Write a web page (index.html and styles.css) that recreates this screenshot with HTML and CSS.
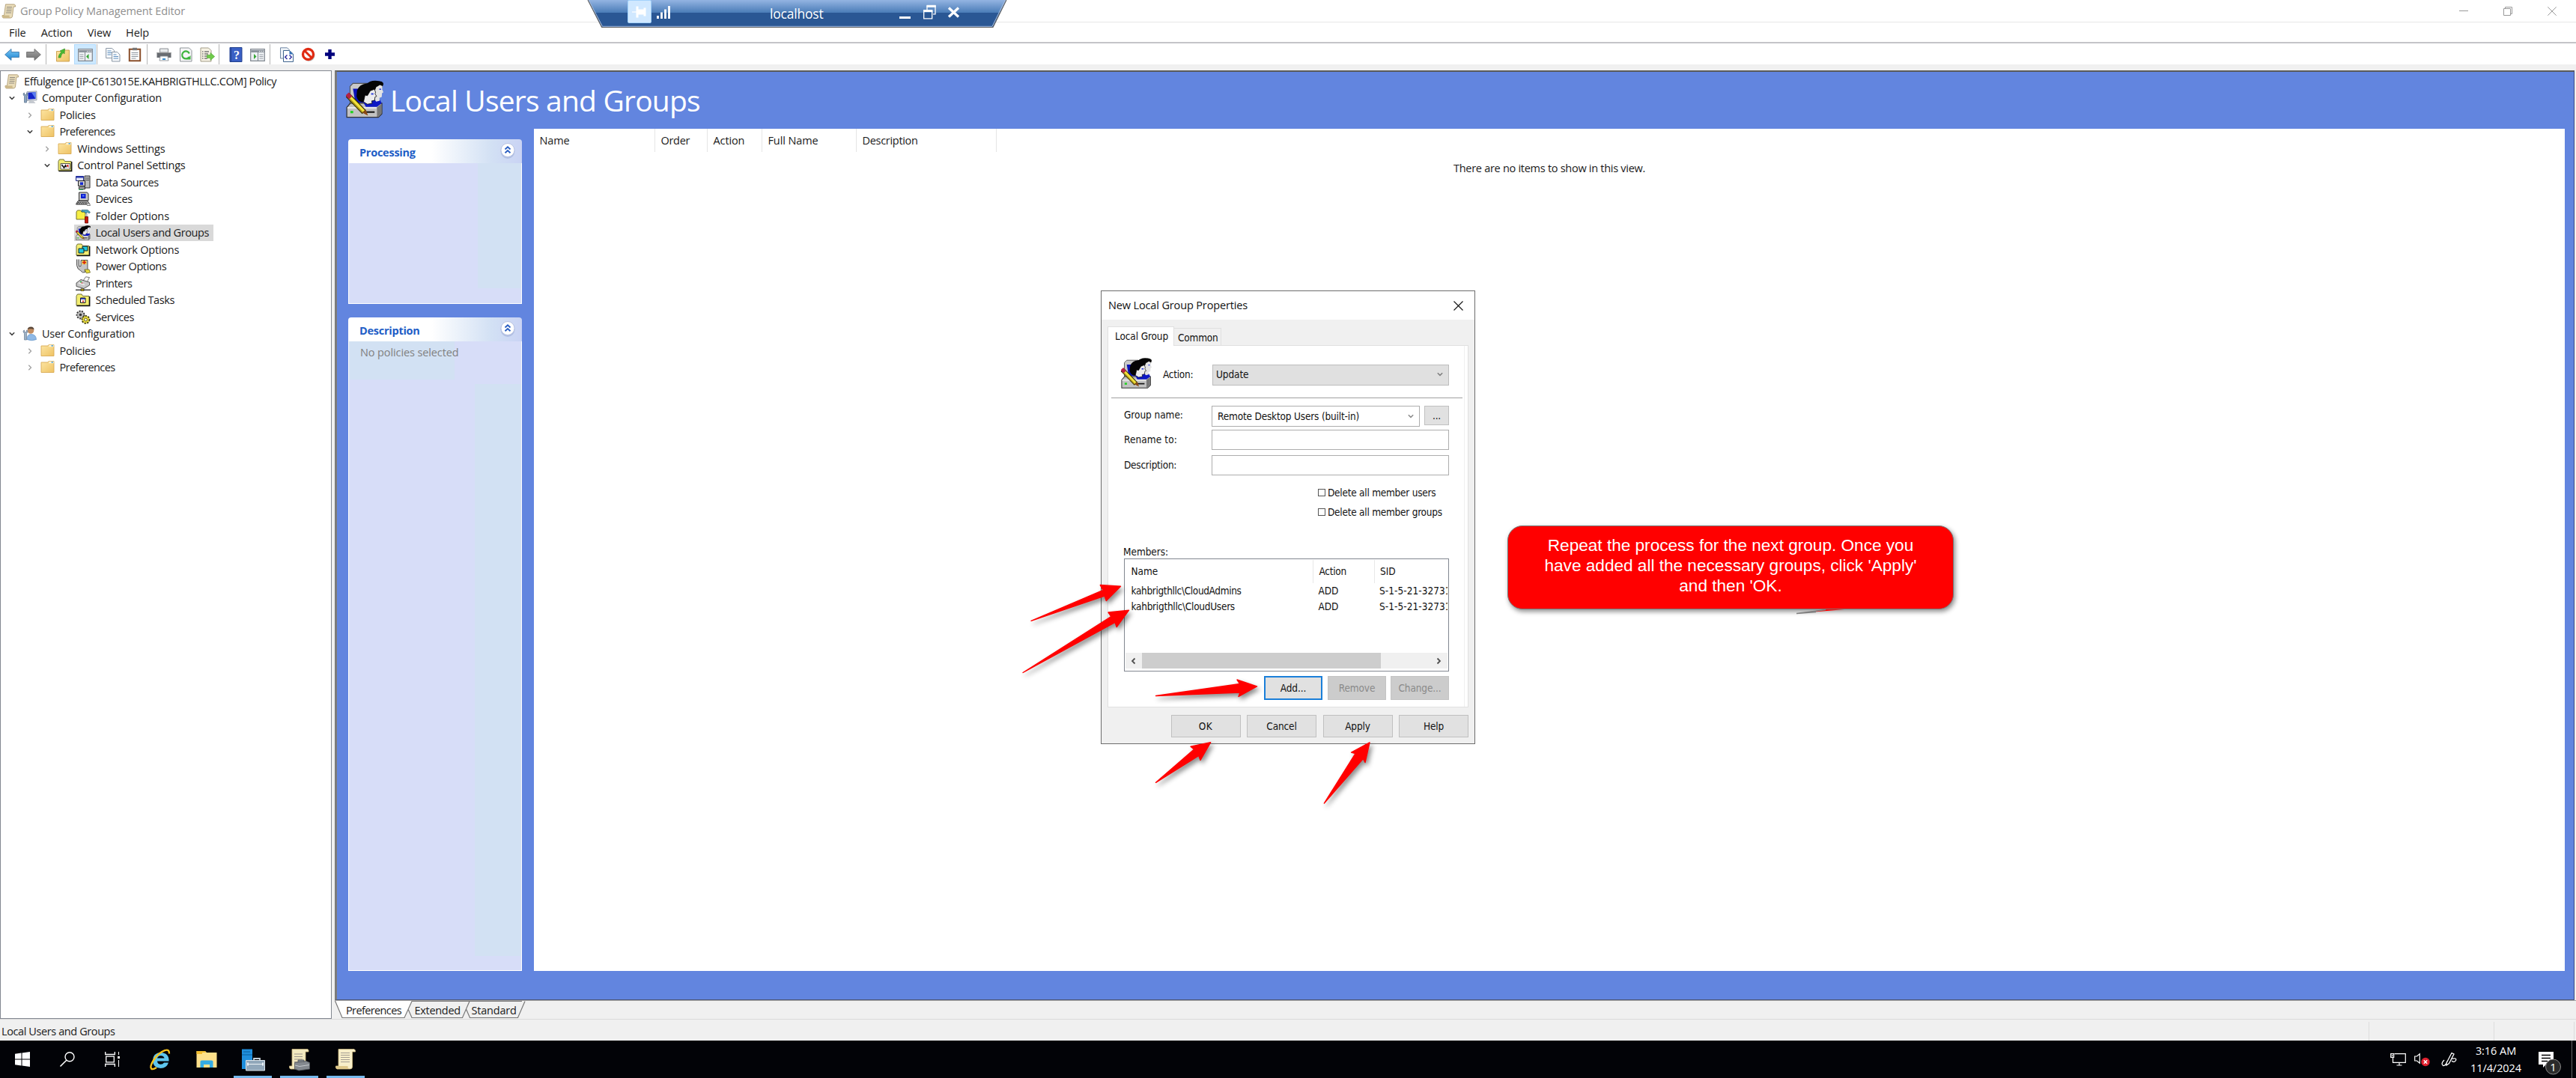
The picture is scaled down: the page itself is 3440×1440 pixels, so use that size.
FILE: index.html
```html
<!DOCTYPE html>
<html lang="en">
<head>
<meta charset="utf-8">
<title>Group Policy Management Editor</title>
<link rel="stylesheet" href="styles.css">
</head>
<body>
<svg class="defs" aria-hidden="true">
  <defs>
    <linearGradient id="gFolder" x1="0" y1="0" x2="1" y2="1"><stop offset="0" stop-color="#fde6a4"/><stop offset="1" stop-color="#eec263"/></linearGradient>
    <linearGradient id="gRdp" x1="0" y1="0" x2="0" y2="1"><stop offset="0" stop-color="#93b4e2"/><stop offset="1" stop-color="#4a7cb7"/></linearGradient>
    <linearGradient id="gBack" x1="0" y1="0" x2="0" y2="1"><stop offset="0" stop-color="#7cc8f5"/><stop offset="1" stop-color="#1b82cf"/></linearGradient>
    <linearGradient id="gFwd" x1="0" y1="0" x2="0" y2="1"><stop offset="0" stop-color="#a5a5a5"/><stop offset="1" stop-color="#6f6f6f"/></linearGradient>
    <symbol id="scroll" viewBox="0 0 20 20"><path d="M5.500.8h11.500q2 .5 1.500 3.200h-2.500L14.500 17q-.5 2-2.500 2H2.500Q.6 18.500 1 15.500h2.500z" fill="#e9dcb9" stroke="#a8946a" stroke-width=".8"/><path d="M1 15.500h9.500q-.3 3 1.500 3.400H2.500Q.6 18.500 1 15.500z" fill="#cdb98a"/><path d="M7 4.500h7M6.700 7h7M6.500 9.500h7M6 12h7" stroke="#8f8a80" stroke-width="1"/></symbol>
    <symbol id="folder" viewBox="0 0 20 20"><path d="M1 3h9l1-1.500h7v15H1z" fill="url(#gFolder)" stroke="#d9ab55" stroke-width=".9"/><path d="M11.500 1.700h6.200v2.600h-6.200z" fill="#fff6d8"/><path d="M14.500 2H17v1.700h-2.500z" fill="#62aee0"/></symbol>
    <symbol id="yfolder" viewBox="0 0 20 20"><path d="M1 4.500 2.500 2h5.500l1.500 2.500H18V17H1z" fill="#f3ee72" stroke="#6e6e38"/><path d="M1.500 17.500h17.200V5" fill="none" stroke="#111" stroke-width="1.400"/></symbol>
    <symbol id="users" viewBox="0 0 32 32">
      <path d="M3.500 5 6 2.500h12V20H3.500z" fill="#c9c9c9" stroke="#555" stroke-width=".7"/><path d="M6 7h10v12H8z" fill="#0a12b8"/>
      <path d="M.7 23l3-3.500h27v9l-3 3H.7z" fill="#c2c2c2" stroke="#333" stroke-width=".8"/><path d="M26.500 31v-8l3.800-3v8.500l-3 2.500z" fill="#777"/><path d="M1.200 23.300h25" stroke="#f4f4f4"/><path d="M15 27h9.500" stroke="#111" stroke-width="1.300"/><path d="M3.800 26h2.400v2H3.800z" fill="#1fd31f"/>
      <path d="M15 19l8-3 6 .5 1.500 3-4 3H17z" fill="#0d18c4"/>
      <path d="M17 3.500Q20 .2 25 .2q7 .1 7 2.800l-1 3-4.500-.5z" fill="#050505"/>
      <path d="M24.500 6.500 29 3.800l2.200 1-.3 2.700 1.100 2.500-1.200.8-.2 3.200-2 .8.200 2.500-3 .8-2-3z" fill="#e4e4e4"/><path d="M28.500 7.500h1.500" stroke="#2336d8"/>
      <path d="M9 13.500 9.500 8.500Q11.500 3 17.500 2.500q6-.7 8.500 2.800l-1 2.700-1 1-5 5-2 3.500-3 1Q10 18 9 13.500z" fill="#050505"/>
      <path d="M16.300 12.500l2 .5 2.500-4.200 3.500-1.300 1 2.500-.4 1.500 1.300 2-1.400.7-.3 2.800-2.500.5.400 2-4 .8-3.400-2z" fill="#ececec" stroke="#050505" stroke-width=".5"/><path d="M21.500 11.500h2" stroke="#2336d8" stroke-width="1.200"/>
      <path d="M1.500 12.500 15.500 27" stroke="#332d00" stroke-width="4.600"/><path d="M3 14 15 26.500" stroke="#f4e23c" stroke-width="3"/><path d="M2.200 14.800 14 27" stroke="#a99416"/><path d="M1 11.500l3 3.200" stroke="#b52043" stroke-width="3.800"/><path d="M14 27.500l3-2.500 1.800 5z" fill="#8b4a14"/>
    </symbol>
    <symbol id="server" viewBox="0 0 20 20"><path d="M12 1h7v16h-7z" fill="#bbb" stroke="#333"/><path d="M13.500 4H18M13.500 6.500H18" stroke="#444"/><path d="M.5 1.500h10v6H.5z" fill="#dfe3f5" stroke="#222b80"/><path d="M.5 2.500h10" stroke="#2534b0" stroke-width="2"/><path d="M3.500 7.500h9v7h-9z" fill="#ccc" stroke="#222"/><path d="M6 9.500h4V13H6z" fill="#1528d0"/><path d="M4.500 16h8v2.500h-8z" fill="#ccc" stroke="#222"/><path d="M4 19.300h6" stroke="#39c06a"/></symbol>
    <symbol id="device" viewBox="0 0 20 20"><path d="M4.500 1h11l1.500 2v9H4.500z" fill="#c9c9c9" stroke="#333"/><path d="M7 3h6.500v6H7z" fill="#0c1ed0"/><path d="M9 4.500h2.500v2H9z" fill="#5c80ff"/><path d="M3 12.500h13l2.500 4.500H.5z" fill="#bdbdbd" stroke="#333"/><path d="M3 14.500h12M2 16h13" stroke="#222" stroke-dasharray="1.500 1"/><path d="M14.500 15.500h4l1 3h-4z" fill="#ddd" stroke="#555" stroke-width=".7"/></symbol>
    <symbol id="fopt" viewBox="0 0 20 20"><path d="M1 4 2.500 2h4l1.500 2h5v10H1z" fill="#f6ef45" stroke="#75702a"/><path d="M8 1.500h8l3.500 3-1.500 1.500-2.500-2-1 2H13l-1-2H8z" fill="#4ea7c4" stroke="#134a5c" stroke-width=".6"/><path d="M13.300 6h2.400v5h-2.400z" fill="#bbb"/><path d="M12.500 10.500h4V19h-4z" fill="#c9190f" stroke="#5c0c08" stroke-width=".8"/></symbol>
    <symbol id="power" viewBox="0 0 20 20"><path d="M1.500.5v8q.5 5 5 7l3 2.500 3.500-.5-1-3h4V1.500H7v8H4.500V.5" fill="#c4c4c4" stroke="#333" stroke-width=".8"/><path d="M8.500 2h6v5h-6z" fill="#f4d53a"/><path d="M11.500 2v5M9 4.500h5" stroke="#d41c12" stroke-width="1.600"/><path d="M12 14h6l1.500 4-5 1z" fill="#e6da3b" stroke="#5e5a1a" stroke-width=".7"/></symbol>
    <symbol id="printer" viewBox="0 0 20 20"><path d="M10 6 13.500.8l5 .8L15 8z" fill="#fff" stroke="#555" stroke-width=".8"/><path d="M1 9l6-4.500L18.500 8v4L11 16.500 1 13.500z" fill="#c8c8c8" stroke="#333" stroke-width=".8"/><path d="M4 9l8 2.500" stroke="#eee" stroke-width="1.500"/><path d="M6 7.500h2" stroke="#28b13a" stroke-width="1.500"/><path d="M7.500 9h2" stroke="#d22"/><path d="M0 18.300h20" stroke="#111" stroke-width="1.200"/><path d="M7 16.800h4v3H7z" fill="#b79f16" stroke="#111" stroke-width=".6"/></symbol>
    <symbol id="gears" viewBox="0 0 20 20"><circle cx="6.500" cy="6.500" r="5" fill="#bdbdbd" stroke="#333" stroke-width="1.800" stroke-dasharray="2 1.500"/><circle cx="6.500" cy="6.500" r="1.800" fill="#333"/><circle cx="13.500" cy="13" r="5" fill="#e9dc3c" stroke="#454011" stroke-width="1.900" stroke-dasharray="2.200 1.500"/><circle cx="13.500" cy="13" r="1.900" fill="#fffde0" stroke="#454011" stroke-width=".8"/></symbol>
    <symbol id="pc" viewBox="0 0 20 20"><path d="M6 1.500 19 .8v12L6 13.500z" fill="#cfd4dc" stroke="#8f97a4" stroke-width=".8"/><path d="M7.500 2.800 17.500 2v9L7.500 11.800z" fill="#1425c8"/><path d="M12 2.400l5.500-.4v9z" fill="#5a7df0"/><path d="M9 14h6l2.500 3H8z" fill="#c5c9d0"/><path d="M1 4q0 2.500 1.500 3.500V16h3V7.500Q7 6.500 7 4L5.500 3v2.500h-3V3z" fill="#8aa3bd" stroke="#56708c" stroke-width=".7"/></symbol>
    <symbol id="user" viewBox="0 0 20 20"><circle cx="11" cy="5.500" r="4.300" fill="#c28e63"/><path d="M6.600 4.500Q7 .5 11.500.5q4 .3 4 4-2-1.500-5-1.200-2.500 0-3.900 1.200z" fill="#5a4738"/><path d="M6 17.500Q6 10.500 11.500 10.500 18 10.500 18.500 17.500q-6 2.500-12.500 0z" fill="#8fb9e6" stroke="#5f8fc4" stroke-width=".7"/><path d="M1 6q0 2.500 1.500 3.500V18h3V9.500Q7 8.500 7 6L5.500 5v2.500h-3V5z" fill="#9db1c4" stroke="#6a8098" stroke-width=".7"/></symbol>
    <symbol id="down" viewBox="0 0 8 8"><path d="M.8 2.200 4 5.400 7.200 2.200" fill="none" stroke="#404040" stroke-width="1.500"/></symbol>
    <symbol id="right" viewBox="0 0 8 8"><path d="M2.300.8 5.500 4 2.300 7.200" fill="none" stroke="#a0a0a0" stroke-width="1.300"/></symbol>
    <symbol id="panel" viewBox="0 0 20 20"><path d="M.7 2.700h18.600v15.600H.7z" fill="#eef1f4" stroke="#7f868e" stroke-width="1.200"/><path d="M1.200 4h17.600v3H1.200z" fill="#8c949d"/><path d="M12 5.500h1.200M14.500 5.500h1.200M17 5.500h1" stroke="#fff"/></symbol>
  </defs>
</svg>

<div class="window">
  <header class="titlebar">
    <svg class="i20"><use href="#scroll"/></svg>
    <span class="app-title">Group Policy Management Editor</span>
    <div class="controls">
      <svg width="12" height="12" viewBox="0 0 12 12"><path d="M0 5.500h12" stroke="#999"/></svg>
      <svg width="12" height="12" viewBox="0 0 12 12"><path d="M.5 2.500h9v9h-9zM2.500 2.500v-2h9v9h-2" fill="none" stroke="#999"/></svg>
      <svg width="12" height="12" viewBox="0 0 12 12"><path d="M.3.3l11.400 11.400M11.700.3.3 11.700" stroke="#999"/></svg>
    </div>
  </header>
  <nav class="menubar"><span>File</span><span>Action</span><span>View</span><span>Help</span></nav>
  <div class="toolbar">
    <div class="tg g1">
      <svg class="i20" viewBox="0 0 20 20"><path d="M.6 10 9 2.500V6.500h10.400v7H9v4z" fill="url(#gBack)" stroke="#3b78ad" stroke-width=".9"/></svg>
      <svg class="i20" viewBox="0 0 20 20"><path d="M19.400 10 11 2.500V6.500H.6v7H11v4z" fill="url(#gFwd)" stroke="#6d6d6d" stroke-width=".9"/></svg>
    </div>
    <div class="tg g2">
      <svg class="i20" viewBox="0 0 20 20"><path d="M1.500 5.500h9l1-1.500h7v15h-17z" fill="url(#gFolder)" stroke="#c99b47" stroke-width=".9"/><path d="M4 14q.5-5 4-7.500L6 5l6.500-3-.5 7-1.800-1.500Q7.500 10 7 14z" fill="#49ba33" stroke="#2e8a1f" stroke-width=".6"/></svg>
      <span class="pressed"><svg class="i20" viewBox="0 0 20 20"><use href="#panel"/><path d="M9.500 7v11" stroke="#7f868e"/><path d="M2.500 10h5M2.500 12.500h5M2.500 15h5" stroke="#9aa0a8"/><path d="M14.500 9v7L11 12.500z" fill="#35a635"/></svg></span>
    </div>
    <div class="tg g3">
      <svg class="i20" viewBox="0 0 20 20"><path d="M.6 1.500h8l3 3v10H.6z" fill="#f7f9fb" stroke="#8c98a6"/><path d="M2.500 5h5M2.500 7.500h6M2.500 10h5" stroke="#5d8fc0"/><path d="M8.500 6.500h7l3.500 3.500v9H8.500z" fill="#f7f9fb" stroke="#8c98a6"/><path d="M10.500 10h4M10.500 12.500h6.500M10.500 15h6.500" stroke="#5d8fc0"/></svg>
      <svg class="i20" viewBox="0 0 20 20"><path d="M2.800 2.800h14.400v15.400H2.800z" fill="#fff" stroke="#8a4f2b" stroke-width="2"/><path d="M7 .8h6v3.400H7z" fill="#777"/><path d="M5.500 7.500h9M5.500 10h9M5.500 12.500h9M5.500 15h6" stroke="#8b939c"/></svg>
    </div>
    <div class="tg g4">
      <svg class="i20" viewBox="0 0 20 20"><path d="M4.500 2h11v5h-11z" fill="#e8eaec" stroke="#8d9196"/><path d="M.5 7h19v7H.5z" fill="#676b70"/><path d="M.5 7.500h19" stroke="#999"/><path d="M5 12h10l1 6H4z" fill="#f6f8fa" stroke="#858a90" stroke-width=".8"/><path d="M8 15h4v2H8z" fill="#3b8fd3"/></svg>
      <svg class="i20" viewBox="0 0 20 20"><path d="M2.500 1h12l3.500 3.500V19H2.500z" fill="#f5f6f7" stroke="#8f9499"/><path d="M14.500 13a5 5 0 1 1 .3-4.500" fill="none" stroke="#3db43d" stroke-width="2.200"/><path d="M16.500 11v5.500h-5.500z" fill="#3db43d"/></svg>
      <svg class="i20" viewBox="0 0 20 20"><path d="M1 1h10.500L15 4.500V19H1z" fill="#f6f2e4" stroke="#a39d88"/><path d="M3 6h1.500M3 9h1.500M3 12h1.500M3 15h1.500M6 6h6M6 9h5M6 12h4M6 15h4" stroke="#777" stroke-width="1.300"/><path d="M9.500 10.500H14V7.500l5.700 5-5.700 5V14.500H9.500z" fill="#6fcb4a" stroke="#4aa52e" stroke-width=".6"/></svg>
    </div>
    <div class="tg g5">
      <svg class="i20" viewBox="0 0 20 20"><path d="M2 .5h16v19H2z" fill="#3a5fc4" stroke="#22418f"/><path d="M3.500 1v18" stroke="#22418f"/><text x="11" y="15.500" class="q">?</text></svg>
      <svg class="i20" viewBox="0 0 20 20"><use href="#panel"/><path d="M10.500 7v11" stroke="#7f868e"/><path d="M12.500 10h5M12.500 12.500h5M12.500 15h5" stroke="#9aa0a8"/><path d="M5 9v7l3.500-3.500z" fill="#35a635"/></svg>
    </div>
    <div class="tg g6">
      <svg class="i20" viewBox="0 0 20 20"><path d="M1.500.8h9l3 3V15h-12z" fill="#eef3f8" stroke="#7289a5"/><path d="M5.500 4.500h8L18.500 9v10.500h-13z" fill="#fff" stroke="#3f648e"/><path d="M13.500 4.500v5h5z" fill="#2f6fb5"/><path d="M10.500 10.500l-2.800 2.800 2.800 2.800M13.500 10.500l2.800 2.800-2.800 2.800" fill="none" stroke="#2c2ca0" stroke-width="1.400"/></svg>
      <svg class="i20" viewBox="0 0 20 20"><circle cx="10.500" cy="10.800" r="8" fill="#777" opacity=".5"/><circle cx="9.500" cy="9.500" r="7" fill="#fff" stroke="#e02a12" stroke-width="3.300"/><path d="M4.500 4.500l10 10" stroke="#e02a12" stroke-width="3"/></svg>
      <svg class="i20" viewBox="0 0 20 20"><path d="M9.500 3v13M3 9.500h13" stroke="#00007c" stroke-width="4.400"/></svg>
    </div>
  </div>

  <main class="workspace">
    <section class="tree">
      <div class="row root"><svg class="i20"><use href="#scroll"/></svg><span class="t4">Effulgence [IP-C613015E.KAHBRIGTHLLC.COM] Policy</span></div>
      <div class="row l1"><svg class="chev"><use href="#down"/></svg><svg class="i20"><use href="#pc"/></svg><span>Computer Configuration</span></div>
      <div class="row l2"><svg class="chev"><use href="#right"/></svg><svg class="i20"><use href="#folder"/></svg><span class="t3">Policies</span></div>
      <div class="row l2"><svg class="chev"><use href="#down"/></svg><svg class="i20"><use href="#folder"/></svg><span class="t6">Preferences</span></div>
      <div class="row l3"><svg class="chev"><use href="#right"/></svg><svg class="i20"><use href="#folder"/></svg><span class="t1">Windows Settings</span></div>
      <div class="row l3"><svg class="chev"><use href="#down"/></svg><svg class="i20" viewBox="0 0 20 20"><use href="#yfolder"/><path d="M4 7.500h12.500V15H4z" fill="#fff" stroke="#333" stroke-width=".8"/><path d="M5.500 9l3 4 2-3 1 2.500" fill="none" stroke="#111" stroke-width="1.600"/><path d="M11.500 10l3-1.500v5z" fill="#c81e14"/></svg><span>Control Panel Settings</span></div>
      <div class="row l4"><svg class="i20"><use href="#server"/></svg><span class="t4">Data Sources</span></div>
      <div class="row l4"><svg class="i20"><use href="#device"/></svg><span class="t3">Devices</span></div>
      <div class="row l4"><svg class="i20"><use href="#fopt"/></svg><span class="t1">Folder Options</span></div>
      <div class="row l4"><div class="selected"><svg class="i20"><use href="#users"/></svg><span class="t4">Local Users and Groups</span></div></div>
      <div class="row l4"><svg class="i20" viewBox="0 0 20 20"><use href="#yfolder"/><path d="M9 5h7v6H9z" fill="#20c9dd" stroke="#111" stroke-width=".9"/><path d="M4 8h7v6H4z" fill="#20c9dd" stroke="#111" stroke-width=".9"/></svg><span>Network Options</span></div>
      <div class="row l4"><svg class="i20"><use href="#power"/></svg><span class="t4">Power Options</span></div>
      <div class="row l4"><svg class="i20"><use href="#printer"/></svg><span class="t5">Printers</span></div>
      <div class="row l4"><svg class="i20" viewBox="0 0 20 20"><use href="#yfolder"/><path d="M6.500 7h6.500v6.500H6.500z" fill="#fff" stroke="#111"/><path d="M6.500 8h6.500" stroke="#1e2ea0" stroke-width="1.800"/><path d="M9 10.500h2v2H9z" fill="#c22"/></svg><span class="t4">Scheduled Tasks</span></div>
      <div class="row l4"><svg class="i20"><use href="#gears"/></svg><span class="t4">Services</span></div>
      <div class="row l1"><svg class="chev"><use href="#down"/></svg><svg class="i20"><use href="#user"/></svg><span>User Configuration</span></div>
      <div class="row l2"><svg class="chev"><use href="#right"/></svg><svg class="i20"><use href="#folder"/></svg><span class="t3">Policies</span></div>
      <div class="row l2"><svg class="chev"><use href="#right"/></svg><svg class="i20"><use href="#folder"/></svg><span class="t6">Preferences</span></div>
    </section>

    <section class="right">
      <div class="pane">
        <div class="banner"><svg class="bighead"><use href="#users"/></svg><h1>Local Users and Groups</h1></div>
        <div class="pane-body">
          <aside class="side">
            <div class="card processing"><div class="card-head"><b>Processing</b><svg class="collapse" viewBox="0 0 22 22"><ellipse cx="11" cy="12" rx="9.500" ry="10" fill="#8f9fce" opacity=".45"/><circle cx="11" cy="10.500" r="9" fill="#fff" stroke="#b9c3e2"/><path d="M7.500 9.500 11 6.300l3.500 3.200M7.500 14.200 11 11l3.500 3.200" fill="none" stroke="#2b5fc2" stroke-width="1.900"/></svg></div><div class="card-body"></div></div>
            <div class="card description"><div class="card-head"><b>Description</b><svg class="collapse" viewBox="0 0 22 22"><ellipse cx="11" cy="12" rx="9.500" ry="10" fill="#8f9fce" opacity=".45"/><circle cx="11" cy="10.500" r="9" fill="#fff" stroke="#b9c3e2"/><path d="M7.500 9.500 11 6.300l3.500 3.200M7.500 14.200 11 11l3.500 3.200" fill="none" stroke="#2b5fc2" stroke-width="1.900"/></svg></div><div class="card-body">No policies selected</div></div>
          </aside>
          <div class="list">
            <div class="list-head"><span class="t1">Name</span><span class="t3">Order</span><span class="t1">Action</span><span class="t1">Full Name</span><span class="t3">Description</span></div>
            <p class="empty">There are no items to show in this view.</p>
          </div>
        </div>
      </div>
      <div class="tabs">
        <svg class="tab-shape" width="256" height="24" viewBox="0 0 256 24"><path d="M0 0 9.500 22.500H93.500L103 0z" fill="#fff"/><path d="M.5 0 10 22.500H93L103 .5H250M98 11l5 11.500H170.500L180 .5M175.500 11l5 11.500H244.500L254 .5" fill="none" stroke="#777" stroke-width="1.200"/></svg>
        <span class="t6">Preferences</span><span class="t3">Extended</span><span>Standard</span>
      </div>
    </section>
  </main>

  <footer class="status"><span class="t4">Local Users and Groups</span><i class="s1"></i><i class="s2"></i><i class="s3"></i></footer>
</div>

<div class="taskbar">
  <div class="start"><svg width="20" height="20" viewBox="0 0 20 20"><path d="M0 2.800 8.500 1.600v7.900H0zM9.500 1.400 20 0v9.500H9.500zM0 10.500h8.500v7.900L0 17.200zM9.500 10.500H20V20L9.500 18.600z" fill="#fff"/></svg></div>
  <div class="start"><svg width="20" height="20" viewBox="0 0 20 20"><circle cx="13" cy="6.800" r="6" fill="none" stroke="#fff" stroke-width="1.400"/><path d="M8.800 11.200.5 19.500" stroke="#fff" stroke-width="1.600"/></svg></div>
  <div class="start"><svg width="20" height="20" viewBox="0 0 20 20"><path d="M.7 0v3.500h12.600V0M.7 20v-3.500h12.600V20M1.700 6.200h10.600v7.600H1.700z" fill="none" stroke="#fff" stroke-width="1.300"/><path d="M18.500 0v4M18.500 11v9" stroke="#fff"/><path d="M17 6h3v3h-3z" fill="#fff"/></svg></div>
  <div class="apps">
    <div class="app"><svg width="30" height="30" viewBox="0 0 30 30"><path d="M26.500 17.500H11q.5 4.300 4.700 4.300 2.800 0 4.300-2.200h6Q23.500 27 15.500 27 5 26.500 5 16.500 5.300 6.500 15.500 6 27 6.500 26.500 17.500zM11 13.500h9.500Q20 10.500 15.800 10.300 11.800 10.500 11 13.500z" fill="#5ec6ee"/><path d="M27 7.500Q27.500 1 21 3.200 13 6 6.500 15.500 .5 25 3 27.500q2 1.800 7-1.500" fill="none" stroke="#f7c31c" stroke-width="2.400"/></svg></div>
    <div class="app"><svg width="30" height="30" viewBox="0 0 30 30"><path d="M1.500 4h11.500l2 2h13.500v20h-27z" fill="#fde08a"/><path d="M1.500 4h11.500l1 2H9v2H1.500z" fill="#f2bd2e"/><path d="M6.500 26V18q0-1.500 2-1.500h13q2 0 2 1.500v8h-4.500v-4h-8v4z" fill="#34ace4"/></svg></div>
    <div class="app on"><svg width="32" height="30" viewBox="0 0 32 30"><path d="M1 1.500h14V28H1z" fill="#1f8fdd"/><path d="M1 9h14M3 5h9" stroke="#0b5f9e"/><path d="M17 16v-2h8v2" fill="none" stroke="#c3cdd6" stroke-width="1.800"/><path d="M6.500 16.500h25V30h-25z" fill="#91a7ba" stroke="#dbe4eb"/><path d="M9 21.500h20" stroke="#eef3f7"/><path d="M9 19.500v4M29 19.500v4" stroke="#eef3f7" stroke-width="2"/></svg></div>
    <div class="app on"><svg width="30" height="30" viewBox="0 0 30 30"><path d="M5 1.500h21q1.500 1 1 3.500h-4v20q0 3-3 3H3q-2-1-1.500-4H5z" fill="#f2e8bf" stroke="#c6b27a" stroke-width=".8"/><path d="M8 8h11M8 11.500h11M8 15h11M8 18.500h8" stroke="#98918a"/><path d="M13 19v-3h8v3M8.500 19.500 24 17.500l4.500 2V28L14 30l-5.500-2z" fill="#84898f" stroke="#50555a" stroke-width=".8"/><path d="M9 23l6 1.500 13-2" fill="none" stroke="#c5c9cd"/></svg></div>
    <div class="app on"><svg width="30" height="30" viewBox="0 0 30 30"><path d="M5 1.500h21q2 1 1.500 3.500h-4v20q0 3-3 3H3q-2-1-1.500-4H5z" fill="#f8efc9" stroke="#cdb97f" stroke-width=".8"/><path d="M1.500 24h16q-.5 3.500 2.500 4H3q-2-1-1.500-4z" fill="#e0c98a"/><path d="M8 6.500h12M8 9.500h12M8 12.500h12M8 15.500h12M8 18.500h12" stroke="#a39c92"/></svg></div>
  </div>
  <div class="tray">
    <svg width="21" height="20" viewBox="0 0 21 20"><path d="M5.500 2.700h14.800v11.600H3.500V7M12 14.500V18M8.500 18h7" fill="none" stroke="#fff" stroke-width="1.200"/><path d="M.7 2.700h4v4.600h-4zM2.700 4v2" fill="none" stroke="#fff" stroke-width="1.200"/></svg>
    <svg width="21" height="20" viewBox="0 0 21 20"><path d="M.7 6h2.800L7.300 2.700v12.600L3.500 12H.7z" fill="none" stroke="#fff" stroke-width="1.200"/><circle cx="15" cy="13.500" r="5.700" fill="#e0202e"/><path d="M12.800 11.300l4.400 4.400M17.200 11.300l-4.400 4.400" stroke="#fff" stroke-width="1.500"/></svg>
    <svg width="21" height="20" viewBox="0 0 21 20"><path d="M7 15 14 1.500l3 1.500-6.500 12.500L7 18zM4 11q-5 5-1.500 7.500Q6 19 8 12.500M14 9.500q7-2 5.500 2-2 3.500-5.500.5" fill="none" stroke="#fff" stroke-width="1.300"/></svg>
  </div>
  <div class="clock"><span>3:16 AM</span><span>11/4/2024</span></div>
  <div class="notify"><svg width="32" height="32" viewBox="0 0 32 32"><path d="M0 0h20v17H10l-4 4v-4H0z" fill="#fff"/><path d="M4 4.500h12M4 8.500h12M4 12.500h8" stroke="#000" stroke-width="1.300"/><circle cx="19.500" cy="20" r="10" fill="#2b2b2b" stroke="#8a8a8a"/><text x="19.500" y="25.500" class="badge">1</text></svg></div>
</div>

<div class="rdp">
  <svg class="rdp-bg" width="560" height="38" viewBox="0 0 560 38"><path d="M0 0H559L541 36.500H18.500z" fill="#29568f"/><path d="M0 0H559L550.800 17H8.600z" fill="url(#gRdp)"/><path d="M8.600 17H550.800L541.500 36H18.500z" fill="#2a5794"/><path d="M1 0 19.500 35.300H540L557.500 0" fill="none" stroke="#a9bfe0" stroke-width="1"/><path d="M0 0 18.700 36.500H541L559 0" fill="none" stroke="#666" stroke-width="1.100"/></svg>
  <div class="rdp-row">
    <span class="pin"><svg width="20" height="20" viewBox="0 0 20 20"><path d="M0 10h6" stroke="#fff" stroke-width="1.200"/><path d="M7 2.500v15M8 10h9M17 4.500v11" stroke="#fff" stroke-width="3"/><path d="M8 6.500h8v7H8z" fill="#fff"/></svg></span>
    <svg class="signal" width="18" height="17" viewBox="0 0 18 17"><path d="M1.500 17v-4M6.500 17V8.500M11.500 17V4.500M16.500 17V0" stroke="#fff" stroke-width="2.800"/></svg>
    <span class="host">localhost</span>
    <svg class="rmin" width="15" height="20" viewBox="0 0 15 20"><path d="M0 17.500h15" stroke="#fff" stroke-width="3"/></svg>
    <svg class="rres" width="17" height="20" viewBox="0 0 17 20"><path d="M.7 9v9.800h11V9zM5 7V2h11v10.800h-3" fill="none" stroke="#fff" stroke-width="1.300"/><path d="M0 8.500h12.400M4.500 2.200h12.200" stroke="#fff" stroke-width="3"/></svg>
    <svg width="18" height="20" viewBox="0 0 18 20"><path d="M2 4.500l13 12M15 4.500l-13 12" stroke="#fff" stroke-width="3.300"/></svg>
  </div>
</div>

<div class="dialog">
  <div class="dlg-title"><span>New Local Group Properties</span><svg width="13" height="13" viewBox="0 0 13 13"><path d="M.5.5l12 12M12.500.5l-12 12" stroke="#111" stroke-width="1.100"/></svg></div>
  <div class="dlg-tabs"><span class="tab active">Local Group</span><span class="tab">Common</span></div>
  <div class="page">
    <div class="action-row"><svg class="head40"><use href="#users"/></svg><label class="d2">Action:</label><div class="combo disabled"><span class="d1">Update</span><svg class="cv"><use href="#down"/></svg></div></div>
    <div class="fields">
      <label class="d0">Group name:</label><div class="pair"><div class="combo"><span class="grp">Remote Desktop Users (built-in)</span><svg class="cv"><use href="#down"/></svg></div><button class="more">...</button></div>
      <label class="dp">Rename to:</label><div class="input"></div>
      <label class="d3">Description:</label><div class="input"></div>
    </div>
    <div class="checks"><div><i></i>Delete all member users</div><div><i></i>Delete all member groups</div></div>
    <div class="members-label d0">Members:</div>
    <div class="members">
      <div class="mhead"><span>Name</span><span class="d3">Action</span><span>SID</span></div>
      <div class="mrow"><span class="d4">kahbrigthllc\CloudAdmins</span><span>ADD</span><span class="sid">S-1-5-21-32731</span></div>
      <div class="mrow"><span class="d3">kahbrigthllc\CloudUsers</span><span>ADD</span><span class="sid">S-1-5-21-32731</span></div>
      <div class="scroll"><svg width="22" height="20" viewBox="0 0 22 20"><path d="M12.500 6.500 9 10l3.500 3.500" fill="none" stroke="#505050" stroke-width="1.800"/></svg><i></i><svg class="rarr" width="22" height="20" viewBox="0 0 22 20"><path d="M8.500 6.500 12 10l-3.500 3.500" fill="none" stroke="#505050" stroke-width="1.800"/></svg></div>
    </div>
    <div class="member-btns"><button class="focus">Add...</button><button disabled>Remove</button><button disabled>Change...</button></div>
  </div>
  <div class="dlg-btns"><button class="ok">OK</button><button>Cancel</button><button>Apply</button><button>Help</button></div>
</div>

<svg class="arrows" width="480" height="310" viewBox="1360 775 480 310">
  <g fill="#f00" stroke="#f00" stroke-width="1.400" stroke-linejoin="round">
    <path d="M1377 829.300 1473 788.500 1469.200 781.500 1496.500 783.200 1477.300 802.500 1475 796z"/>
    <path d="M1366 898.500 1483.800 823.500 1480 818 1507.500 815.200 1491.200 837.500 1489 831.500z"/>
    <path d="M1543.500 929.500 1655.700 913.500 1652 908 1678.500 917 1654 930.500 1656 925z"/>
    <path d="M1543.500 1045.300 1594.500 1001 1590 997.200 1616.700 991.600 1603 1015.500 1600.800 1009.500z"/>
    <path d="M1768.300 1073 1810 1006.500 1804.500 1005 1829 991.800 1823 1018.500 1820.300 1013.500z"/>
  </g>
</svg>

<div class="callout">
  <svg class="tail" width="66" height="8" viewBox="0 0 66 8"><path d="M0 6.500 40 1h24z" fill="#f00"/><path d="M0 6.500 39 1.500M0 6.500l26-2" stroke="#808080" stroke-width="1.300"/></svg>
  <p>Repeat the process for the next group. Once you<br>have added all the necessary groups, click 'Apply'<br>and then 'OK.</p>
</div>
</body>
</html>
```
FILE: styles.css
```css
* { box-sizing: border-box; }
html, body { margin: 0; width: 3440px; height: 1440px; overflow: hidden; }
body {
  display: flex;
  flex-direction: column;
  position: relative;
  background: #fff;
  color: #1a1a1a;
  font: 14.5px/20px "Open Sans", "Noto Sans", sans-serif;
  letter-spacing: -.21px;
  white-space: nowrap;
}
svg { display: block; flex: none; overflow: visible; }
.defs { position: absolute; width: 0; height: 0; }
.i20 { width: 20px; height: 20px; }
.t1 { letter-spacing: -.11px; }
.t3 { letter-spacing: -.3px; }
.t4 { letter-spacing: -.4px; }
.t5 { letter-spacing: -.54px; }
.t6 { letter-spacing: -.62px; }

/* Main window frame */
.window { height: 1390px; display: flex; flex-direction: column; background: #f0f0f0; }
.titlebar { height: 30px; display: flex; align-items: center; background: #fff; border-bottom: 1px solid #e8e8e8; padding: 0 26px 0 2px; }
.titlebar .i20 { margin-right: 5px; }
.app-title { color: #8f8f8f; letter-spacing: -.11px; }
.controls { margin-left: auto; display: flex; gap: 47px; }
.menubar { height: 28px; display: flex; gap: 20px; background: #fff; border-bottom: 2px solid #c4c4c8; padding: 4px 0 0 12px; letter-spacing: -.08px; }
.toolbar { height: 28px; display: flex; background: #fff; }
.tg { display: flex; align-items: center; gap: 9px; padding: 0 0 0 12px; border-right: 1px solid #b5b5b5; height: 27px; margin-top: 1px; }
.g1 { width: 62px; padding-left: 6px; }
.g2 { width: 68px; gap: 5px; }
.g3 { width: 67px; padding-left: 11px; }
.g4 { width: 96px; }
.g5 { width: 68px; }
.g6 { border: 0; }
.pressed { width: 29px; height: 27px; display: flex; align-items: center; justify-content: center; background: #cce8ff; border: 1px solid #b3dbfb; }
.q { font: bold 16px "Liberation Serif", serif; fill: #fff; text-anchor: middle; }

.workspace { flex: 1; display: flex; padding-top: 8px; min-height: 0; }

/* Console tree */
.tree { width: 443px; height: 1267px; background: #fff; border: 1px solid #828790; padding-top: 2.500px; }
.row { height: 22.500px; display: flex; align-items: center; }
.row .i20 { margin-right: 6px; }
.chev { width: 8px; height: 8px; margin: 0 10px 0 6px; }
.root { padding-left: 5px; }
.l1 { padding-left: 5px; }
.l2 { padding-left: 28.500px; }
.l3 { padding-left: 52.200px; }
.l4 { padding-left: 100.400px; }
.selected { display: flex; align-items: center; height: 22px; background: #d9d9d9; padding: 0 6px 0 2px; margin-left: -2px; }

/* Result pane */
.right { flex: 1; margin-left: 4px; display: flex; flex-direction: column; min-width: 0; }
.pane { height: 1242px; margin-right: 2px; background: #6285df; border: 2px solid; border-width: 2px 1px 1px 3px; border-color: #5a5a5a #3c4a80 #4d5575 #7b7b7b; display: flex; flex-direction: column; }
.banner { height: 76px; display: flex; padding: 11px 0 0 12px; }
.bighead { width: 50px; height: 51px; }
h1 { margin: 0 0 0 9px; font-size: 39px; font-weight: 400; line-height: 54px; letter-spacing: -.8px; color: #fff; }
.pane-body { display: flex; height: 1125px; padding-left: 15px; }
.side { width: 232px; padding-top: 14px; display: flex; flex-direction: column; gap: 18px; }
.card { display: flex; flex-direction: column; }
.processing { height: 220px; }
.description { flex: 1; }
.card-head { height: 32px; display: flex; align-items: center; justify-content: space-between; padding: 3px 8px 0 15px; border-radius: 4px 4px 0 0; background: linear-gradient(90deg, #fff 48%, #d3e1f4 82%, #c9d3f4); }
.card-head b { color: #215dc6; letter-spacing: -.25px; }
.collapse { width: 22px; height: 22px; margin-top: -6px; }
.card-body {
  flex: 1;
  border: 1px solid #fff;
  border-top: 0;
  color: #808080;
  padding: 5px 0 0 15px;
  letter-spacing: -.11px;
  background: linear-gradient(#d2e1f3, #d2e1f3) 172px 0 / 60px calc(100% - 20px) no-repeat #d7ddf8;
}
.description .card-body {
  background:
    linear-gradient(#d2e1f3, #d2e1f3) 0 0 / 141px 51px no-repeat,
    linear-gradient(#d2e1f3, #d2e1f3) 168px 57px / 64px calc(100% - 76px) no-repeat #d7ddf8;
}
.list { width: 2712px; margin-left: 16px; background: #fff; }
.list-head { height: 30px; display: grid; grid-template-columns: 162px 70px 73px 126px 187px; align-items: stretch; line-height: 31px; }
.list-head span { padding-left: 7.500px; border-right: 1px solid #e5e5e5; }
.empty { margin: 13px 0 0; text-align: center; letter-spacing: -.28px; }
.tabs { position: relative; height: 25px; display: flex; border-top: 1px solid #a5a5a5; }
.tab-shape { position: absolute; left: 0; top: 0; }
.tabs span { position: relative; padding-top: 3px; }
.tabs span:nth-of-type(1) { margin-left: 15px; width: 91.500px; }
.tabs span:nth-of-type(2) { width: 76px; }

.status { height: 29px; display: flex; align-items: center; border-top: 1px solid #dadada; padding: 3px 2px 0 2px; }
.status i { border-right: 1px solid #dcdcdc; height: 25px; }
.s1 { margin-left: auto; }
.s2 { width: 167px; }
.s3 { width: 107px; }

/* Taskbar */
.taskbar { height: 50px; display: flex; background: #020307; color: #fff; }
.start { width: 60px; display: flex; align-items: center; justify-content: center; }
.apps { display: flex; gap: 11px; margin-left: 8px; }
.app { width: 51px; display: flex; align-items: center; justify-content: center; border-bottom: 3px solid transparent; padding-top: 2px; }
.on { border-color: #76b9ed; }
.tray { margin-left: auto; display: flex; align-items: center; gap: 11px; padding-right: 17px; }
.tray svg:last-child { margin-left: 4px; }
.clock { width: 70px; display: flex; flex-direction: column; align-items: center; padding-top: 2px; line-height: 23px; letter-spacing: -.06px; }
.notify { width: 67px; padding: 15px 0 0 22px; border-right: 1px solid #666; margin-right: 5px; }
.badge { font: 15px "Open Sans", sans-serif; fill: #fff; text-anchor: middle; }

/* Remote session bar */
.rdp { position: absolute; left: 785px; top: 0; width: 560px; height: 38px; }
.rdp-bg { position: absolute; inset: 0; }
.rdp-row { position: relative; display: flex; align-items: flex-start; padding-left: 53px; color: #fff; }
.pin { width: 32px; height: 31px; display: flex; align-items: center; justify-content: center; background: #d0e8ff; border: 1px solid #a3d2fb; border-radius: 2px; }
.signal { margin: 8px 0 0 7px; }
.host { font-size: 17.500px; line-height: 24px; margin: 6px 0 0 133px; width: 173px; letter-spacing: -.2px; }
.rmin { margin-top: 6px; }
.rres { margin: 6px 15px 0 17px; }
.rdp-row > svg:last-child { margin-top: 6px; }

/* Property dialog */
.dialog { position: absolute; left: 1470px; top: 388px; width: 500px; height: 606px; border: 1px solid #6c6c6c; background: #f0f0f0; display: flex; flex-direction: column; font: 13.500px/18px "DejaVu Sans Condensed", "DejaVu Sans", sans-serif; letter-spacing: -.12px; color: #111; }
.d0 { letter-spacing: -.04px; }
.d1 { letter-spacing: -.08px; }
.dp { letter-spacing: .1px; }
.d2, .d3 { letter-spacing: -.26px; }
.d4 { letter-spacing: -.35px; }
.grp { letter-spacing: -.17px; }
.dlg-title { height: 38px; display: flex; align-items: center; justify-content: space-between; background: #fff; padding: 0 15px 0 9px; font: 14.500px/20px "Open Sans", sans-serif; letter-spacing: -.14px; }
.dlg-tabs { height: 34px; display: flex; align-items: flex-end; padding-left: 8px; }
.tab { height: 23px; width: 63px; padding: 3px 0 0 5px; border: 1px solid #e0e0e0; border-left: 0; border-bottom: 0; letter-spacing: -.2px; }
.tab.active { height: 26px; width: 89px; margin-bottom: -1px; padding: 3px 0 0 9px; background: #fff; border-left: 1px solid #e0e0e0; letter-spacing: -.11px; position: relative; }
.page { width: 482px; height: 484px; margin-left: 8px; background: #fff; border: 1px solid #e0e0e0; box-shadow: inset -4px 0 #fff, inset -5px 0 #efefef; padding-right: 25px; }
.action-row { height: 70px; display: flex; align-items: flex-start; margin: 0 -18px 0 4px; padding: 16px 18px 0 13px; border-bottom: 1px solid #a0a0a0; }
.head40 { width: 41px; height: 41px; }
.action-row label { margin: 13px 0 0 15px; width: 66px; }
.action-row .combo { margin: 9px 0 0; }
.combo { flex: 1; height: 28px; display: flex; align-items: center; justify-content: space-between; border: 1px solid #adadad; padding: 0 7px 1px; background: #fff; }
.combo.disabled { background: #e0e0e0; border-color: #bdbdbd; padding: 0 7px 2px 4px; }
.cv { width: 8px; height: 8px; opacity: .6; }
.fields { display: grid; grid-template-columns: 117px 1fr; row-gap: 4px; align-items: center; padding: 10px 0 0 21px; }
.fields label { line-height: 24px; padding-bottom: 4px; }
.pair { display: flex; gap: 6px; align-items: flex-start; }
.input { height: 27px; border: 1px solid #adadad; margin-bottom: 3px; background: #fff; }
button { font: inherit; letter-spacing: -.12px; color: #111; background: #e1e1e1; border: 1px solid #c0c0c0; padding: 0; height: 30px; width: 93px; }
.more { width: 33px; height: 26px; }
.checks { margin: 7px 0 0 280px; letter-spacing: -.24px; line-height: 26px; }
.checks div { display: flex; align-items: center; gap: 3px; height: 26px; }
.checks i { width: 10px; height: 10px; border: 1px solid #555; background: #fff; }
.members-label { margin: 31px 0 0 20px; }
.members { width: 434px; height: 151px; margin-left: 21px; border: 1px solid #828790; padding: 1px; display: flex; flex-direction: column; overflow: hidden; }
.mhead, .mrow { display: grid; grid-template-columns: 250px 81.500px 1fr; }
.mhead { height: 31px; line-height: 31px; letter-spacing: 0; }
.mhead span { padding-left: 7.500px; }
.mhead span + span { border-left: 1px solid #e8e8e8; }
.mrow { height: 20.500px; line-height: 20px; }
.mrow span { padding-left: 7.500px; }
.mrow .sid { letter-spacing: .06px; overflow: hidden; }
.scroll { height: 21px; margin-top: auto; margin-bottom: 2px; display: flex; align-items: center; background: #f0f0f0; }
.scroll i { width: 319px; height: 21px; background: #cdcdcd; }
.rarr { margin-left: auto; }
.member-btns { display: flex; justify-content: flex-end; gap: 6px; margin-top: 6px; }
.member-btns button { width: 78px; height: 32px; }
.member-btns button:first-child { margin-right: 1px; }
.member-btns .focus { border: 2px solid #1a7fd9; }
.member-btns button:disabled { background: #ccc; border-color: #c4c4c4; color: #8a8a8a; }
.dlg-btns { display: flex; justify-content: flex-end; gap: 8.500px; padding: 10px 8px 0 0; }
.ok { letter-spacing: .6px; }

/* Annotations */
.arrows { position: absolute; left: 1360px; top: 775px; filter: drop-shadow(3px 4px 3px rgba(0, 0, 0, .45)); }
.callout { position: absolute; left: 2013px; top: 702px; width: 596px; height: 112px; background: #f00; border: 1.500px solid #777; border-radius: 20px; box-shadow: 2px 3px 6px rgba(0, 0, 0, .45); }
.callout p { margin: 12px 0 0; text-align: center; color: #fff; font: 22.670px/27px "Liberation Sans", Arial, sans-serif; letter-spacing: -.03px; }
.tail { position: absolute; left: 385px; top: 110px; }
```
